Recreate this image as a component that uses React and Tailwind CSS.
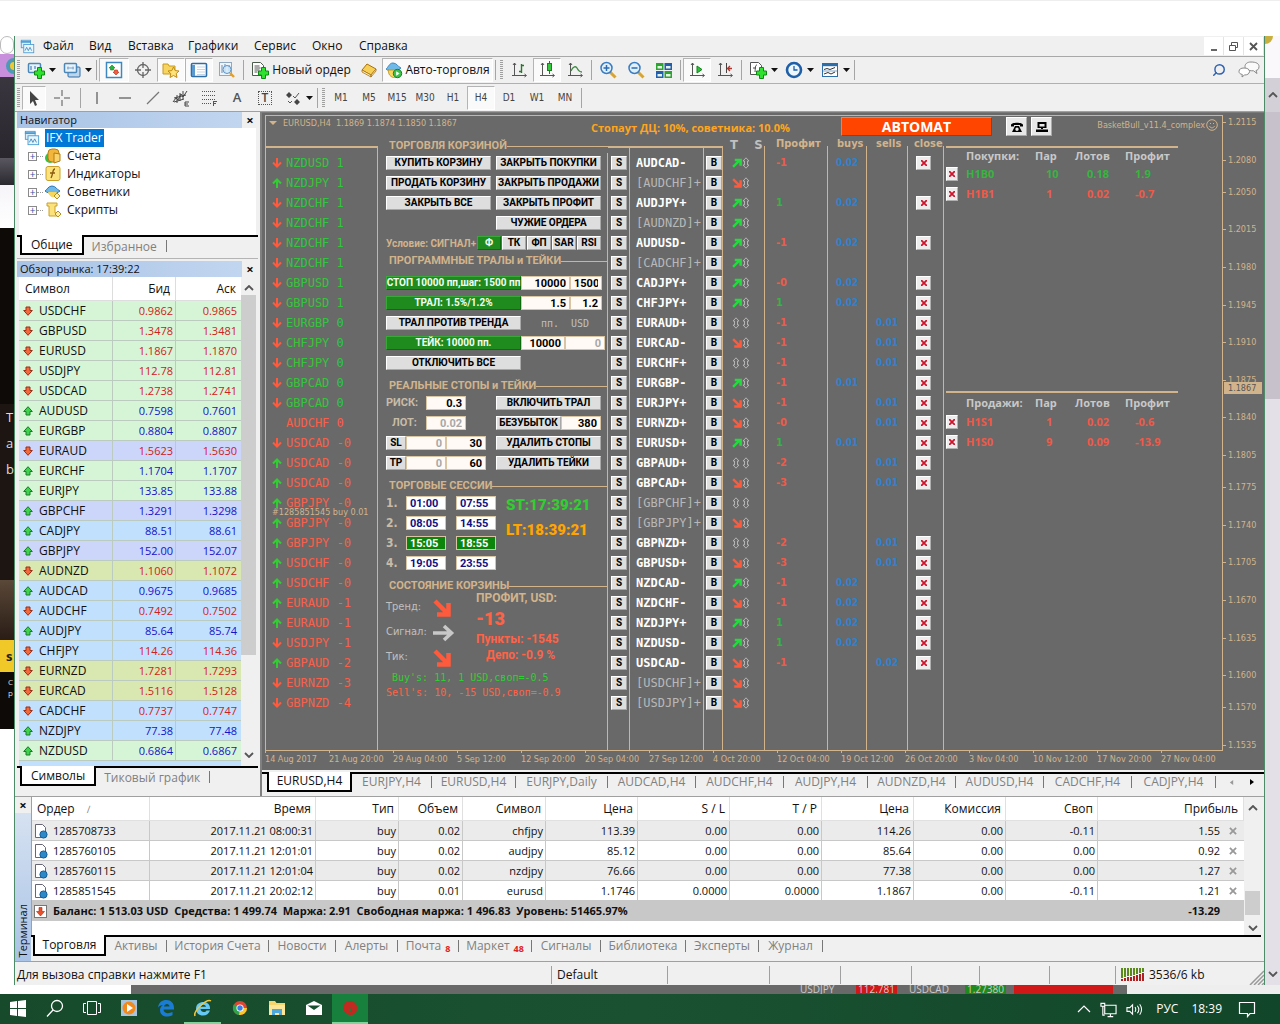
import React from 'react';
import { Search } from 'lucide-react';
import clsx from 'clsx';

const menuItems = [
  ['Файл', 'w-[46px]'],
  ['Вид', 'w-[39px]'],
  ['Вставка', 'w-[60px]'],
  ['Графики', 'w-[66px]'],
  ['Сервис', 'w-[58px]'],
  ['Окно', 'w-[47px]'],
  ['Справка', 'w-[60px]'],
];

const timeframes = ['M1', 'M5', 'M15', 'M30', 'H1', 'H4', 'D1', 'W1', 'MN'];

const quotes = [
  ['USDCHF', '0.9862', '0.9865', 'down', 'green'],
  ['GBPUSD', '1.3478', '1.3481', 'down', 'green'],
  ['EURUSD', '1.1867', '1.1870', 'down', 'green'],
  ['USDJPY', '112.78', '112.81', 'down', 'green'],
  ['USDCAD', '1.2738', '1.2741', 'down', 'green'],
  ['AUDUSD', '0.7598', '0.7601', 'up', 'green'],
  ['EURGBP', '0.8804', '0.8807', 'up', 'green'],
  ['EURAUD', '1.5623', '1.5630', 'down', 'violet'],
  ['EURCHF', '1.1704', '1.1707', 'up', 'green'],
  ['EURJPY', '133.85', '133.88', 'up', 'green'],
  ['GBPCHF', '1.3291', '1.3298', 'up', 'violet'],
  ['CADJPY', '88.51', '88.61', 'up', 'blue'],
  ['GBPJPY', '152.00', '152.07', 'up', 'violet'],
  ['AUDNZD', '1.1060', '1.1072', 'down', 'olive'],
  ['AUDCAD', '0.9675', '0.9685', 'up', 'blue'],
  ['AUDCHF', '0.7492', '0.7502', 'down', 'blue'],
  ['AUDJPY', '85.64', '85.74', 'up', 'blue'],
  ['CHFJPY', '114.26', '114.36', 'down', 'blue'],
  ['EURNZD', '1.7281', '1.7293', 'down', 'olive'],
  ['EURCAD', '1.5116', '1.5128', 'down', 'olive'],
  ['CADCHF', '0.7737', '0.7747', 'down', 'blue'],
  ['NZDJPY', '77.38', '77.48', 'up', 'blue'],
  ['NZDUSD', '0.6864', '0.6867', 'up', 'green'],
];

const rowTone = {
  green: 'bg-[#d6f5d6]',
  violet: 'bg-[#ccd5fa]',
  blue: 'bg-[#c0e0fe]',
  olive: 'bg-[#d9e8b0]',
};

const strength = [
  ['down', 'NZDUSD', '1'], ['up', 'NZDJPY', '1'], ['down', 'NZDCHF', '1'], ['down', 'NZDCHF', '1'],
  ['down', 'NZDCHF', '1'], ['down', 'NZDCHF', '1'], ['down', 'GBPUSD', '1'], ['down', 'GBPUSD', '1'],
  ['down', 'EURGBP', '0'], ['down', 'CHFJPY', '0'], ['down', 'CHFJPY', '0'], ['down', 'GBPCAD', '0'],
  ['down', 'GBPCAD', '0'], ['', 'AUDCHF', '0', true], ['down', 'USDCAD', '-0'], ['up', 'USDCAD', '-0'],
  ['up', 'USDCAD', '-0'], ['up', 'GBPJPY', '-0'], ['up', 'GBPJPY', '-0'], ['up', 'GBPJPY', '-0'],
  ['up', 'USDCHF', '-0'], ['up', 'USDCHF', '-0'], ['up', 'EURAUD', '-1'], ['up', 'EURAUD', '-1'],
  ['down', 'USDJPY', '-1'], ['up', 'GBPAUD', '-2'], ['down', 'EURNZD', '-3'], ['down', 'GBPNZD', '-4'],
];

// symbol, trend, profit, buys, sells
const pairs = [
  ['AUDCAD-', 'up', '-1', '0.02', ''],
  ['[AUDCHF]+', 'down', '', '', ''],
  ['AUDJPY+', 'up', '1', '0.02', ''],
  ['[AUDNZD]+', 'up', '', '', ''],
  ['AUDUSD-', 'up', '-1', '0.02', ''],
  ['[CADCHF]+', 'up', '', '', ''],
  ['CADJPY+', 'up', '-0', '0.02', ''],
  ['CHFJPY+', 'up', '1', '0.02', ''],
  ['EURAUD+', 'flat', '-1', '', '0.01'],
  ['EURCAD-', 'down', '-1', '', '0.01'],
  ['EURCHF+', 'flat', '-1', '', '0.01'],
  ['EURGBP-', 'up', '-1', '0.01', ''],
  ['EURJPY+', 'down', '-1', '', '0.01'],
  ['EURNZD+', 'down', '-0', '', '0.01'],
  ['EURUSD+', 'up', '1', '0.01', ''],
  ['GBPAUD+', 'flat', '-2', '', '0.01'],
  ['GBPCAD+', 'down', '-3', '', '0.01'],
  ['[GBPCHF]+', 'flat', '', '', ''],
  ['[GBPJPY]+', 'down', '', '', ''],
  ['GBPNZD+', 'flat', '-2', '', '0.01'],
  ['GBPUSD+', 'down', '-3', '', '0.01'],
  ['NZDCAD-', 'up', '-1', '0.02', ''],
  ['NZDCHF-', 'down', '-1', '0.02', ''],
  ['NZDJPY+', 'up', '1', '0.02', ''],
  ['NZDUSD-', 'up', '1', '0.02', ''],
  ['USDCAD-', 'down', '-1', '', '0.02'],
  ['[USDCHF]+', 'down', '', '', ''],
  ['[USDJPY]+', 'down', '', '', ''],
];

const prices = [
  1.2115, 1.208, 1.205, 1.2015, 1.198, 1.1945, 1.191, 1.1875, 1.184, 1.1805, 1.1775, 1.174, 1.1705, 1.167,
  1.1635, 1.16, 1.157, 1.1535,
];

const dates = [
  '14 Aug 2017', '21 Aug 20:00', '29 Aug 04:00', '5 Sep 12:00', '12 Sep 20:00', '20 Sep 04:00', '27 Sep 12:00',
  '4 Oct 20:00', '12 Oct 04:00', '19 Oct 12:00', '26 Oct 20:00', '3 Nov 04:00', '10 Nov 12:00', '17 Nov 20:00',
  '27 Nov 04:00',
];

const chartTabs = [
  ['EURJPY,H4', 'w-[80px]'],
  ['EURUSD,H4', 'w-[84px]'],
  ['EURJPY,Daily', 'w-[92px]'],
  ['AUDCAD,H4', 'w-[88px]'],
  ['AUDCHF,H4', 'w-[88px]'],
  ['AUDJPY,H4', 'w-[84px]'],
  ['AUDNZD,H4', 'w-[88px]'],
  ['AUDUSD,H4', 'w-[88px]'],
  ['CADCHF,H4', 'w-[88px]'],
  ['CADJPY,H4', 'w-[84px]'],
];

const terminalTabs = [
  ['Активы', 'w-[61px]'],
  ['История Счета', 'w-[102px]'],
  ['Новости', 'w-[67px]'],
  ['Алерты', 'w-[62px]'],
  ['Почта', 'w-[61px]', '8'],
  ['Маркет', 'w-[73px]', '48'],
  ['Сигналы', 'w-[69px]'],
  ['Библиотека', 'w-[85px]'],
  ['Эксперты', 'w-[73px]'],
  ['Журнал', 'w-[64px]'],
];

const orders = [
  ['1285708733', '2017.11.21 08:00:31', 'buy', '0.02', 'chfjpy', '113.39', '0.00', '0.00', '114.26', '0.00', '-0.11', '1.55'],
  ['1285760105', '2017.11.21 12:01:01', 'buy', '0.02', 'audjpy', '85.12', '0.00', '0.00', '85.64', '0.00', '0.00', '0.92'],
  ['1285760115', '2017.11.21 12:01:04', 'buy', '0.02', 'nzdjpy', '76.66', '0.00', '0.00', '77.38', '0.00', '0.00', '1.27'],
  ['1285851545', '2017.11.21 20:02:12', 'buy', '0.01', 'eurusd', '1.1746', '0.0000', '0.0000', '1.1867', '0.00', '-0.11', '1.21'],
];

const orderColumns = [
  ['Время', 'w-[166px]'],
  ['Тип', 'w-[83px]'],
  ['Объем', 'w-[64px]'],
  ['Символ', 'w-[83px]'],
  ['Цена', 'w-[92px]'],
  ['S / L', 'w-[92px]'],
  ['T / P', 'w-[92px]'],
  ['Цена', 'w-[92px]'],
  ['Комиссия', 'w-[92px]'],
  ['Своп', 'w-[92px]'],
];

/* ---------- icons ---------- */

const Svg = ({ size = 18, box = 18, className, children }) => (
  <svg width={size} height={size} viewBox={`0 0 ${box} ${box}`} fill="none" className={clsx('shrink-0', className)} aria-hidden="true">
    {children}
  </svg>
);

const Plus = () => <path d="M10.5 6.500h4v3.500h3v4h-3v3.500h-4v-3.500h-3v-4h3z" fill="#2fe02f" stroke="#0d8a12" />;

const AppIcon = ({ size = 15 }) => (
  <Svg size={size}>
    <rect x="1.500" y="1.500" width="11" height="9" fill="#d9edfb" stroke="#4a9ad0" />
    <path d="M1 3.500h12" stroke="#4a9ad0" strokeWidth="2" />
    <rect x="4.500" y="6.500" width="12" height="10" fill="#e8f5fd" stroke="#4a9ad0" />
    <path d="M6 14l2-4 2 4 2-4 2 4" stroke="#3a88c0" />
  </Svg>
);

const NewChartIcon = () => (
  <Svg>
    <rect x="1.500" y="2.500" width="12" height="9" rx="1" fill="#e8f2fa" stroke="#4a86b8" strokeWidth="1.500" />
    <path d="M4 5v4M8 5v3" stroke="#2d6da8" />
    <Plus />
  </Svg>
);

const ProfilesIcon = () => (
  <Svg>
    <rect x="5" y="6" width="12" height="10" rx="1" fill="#bdd6ec" stroke="#2d6da8" />
    <rect x="1.500" y="2.500" width="12" height="9" rx="1" fill="#e8f2fa" stroke="#4a86b8" strokeWidth="1.500" />
    <path d="M4 7h7M5 5.500v3M10 5.500v3" stroke="#7aa5cc" />
  </Svg>
);

const MarketIcon = () => (
  <Svg>
    <rect x="1.500" y="1.500" width="15" height="15" fill="#fff" stroke="#3d88c0" strokeWidth="1.500" />
    <path d="M7 4l3 3H8.500v2h-3V7H4z" fill="#22b83a" stroke="#128225" strokeWidth=".6" />
    <path d="M11 14l-3-3h1.500V9h3v2H14z" fill="#f06040" stroke="#b82a18" strokeWidth=".6" />
  </Svg>
);

const TargetIcon = () => (
  <Svg>
    <circle cx="9" cy="9" r="5.500" stroke="#666" strokeWidth="1.300" />
    <path d="M9 1v6M9 11v6M1 9h6M11 9h6" stroke="#666" strokeWidth="1.300" />
  </Svg>
);

const NavigatorIcon = () => (
  <Svg>
    <path d="M1 3h5l1 2h6v8H1z" fill="#f7d560" stroke="#c79a1e" />
    <path d="M11.500 6l1.700 3.600 3.800.4-2.800 2.600.8 3.900-3.500-2-3.500 2 .8-3.900L6 10l3.800-.4z" fill="#ffe27a" stroke="#c08a10" />
  </Svg>
);

const TerminalIcon = () => (
  <Svg>
    <rect x="1.500" y="2.500" width="15" height="13" rx="1" fill="#fff" stroke="#2d6da8" strokeWidth="1.600" />
    <path d="M2 4h3v11H2z" fill="#5a9ad0" />
    <path d="M7 6h8M7 8.500h8M7 11h8M7 13.500h8" stroke="#c5d6e6" />
  </Svg>
);

const TesterIcon = () => (
  <Svg>
    <rect x="1.500" y="1.500" width="12" height="13" fill="#eef4fa" stroke="#8fa9c0" />
    <path d="M4 4v8M7 3v8M11 4v6" stroke="#6b8cab" />
    <circle cx="9" cy="8.500" r="4" fill="#cfe8fb" fillOpacity=".8" stroke="#5c94c8" />
    <path d="M12 12l4 4" stroke="#e0a030" strokeWidth="2.400" />
  </Svg>
);

const NewOrderIcon = () => (
  <Svg>
    <path d="M1.500 1.500h8l3 3v10h-11z" fill="#fff" stroke="#4c5c4c" />
    <path d="M3.500 5h5M3.500 7h6M3.500 9h5M3.500 11h3" stroke="#555" />
    <Plus />
  </Svg>
);

const BookIcon = () => (
  <Svg>
    <path d="M7 3l9 5-5 6-9-5z" fill="#f8cf55" stroke="#a8700c" />
    <path d="M2 9l9 5v2l-9-5zM11 14l5-6v2l-5 6z" fill="#fff1c4" stroke="#a8700c" strokeWidth=".8" />
  </Svg>
);

const ExpertIcon = ({ size = 18 }) => (
  <Svg size={size}>
    <path d="M1 8c2-1 3-6 7-6s5 4 8 5c-3 3-12 4-15 1z" fill="#6fb9e8" stroke="#3d88c0" />
    <path d="M3 9h11l-1 5c-2 4-7 3-9-1z" fill="#f6d65c" stroke="#b98e1a" strokeWidth=".8" />
    <circle cx="12.500" cy="12.500" r="4.200" fill="#3fbf4a" stroke="#128225" />
    <path d="M11.200 10.300v4.400l3.500-2.200z" fill="#fff" />
  </Svg>
);

const Axes = () => <path d="M4.500 2v13M2 14.500h14M3 4l1.500-2L6 4M14.500 13l2 1.500-2 1.500" stroke="#555" />;

const BarsIcon = () => (
  <Svg>
    <Axes />
    <path d="M11.500 3v9M9 10.500h2.500M11.500 4.500H14" stroke="#28762c" strokeWidth="1.400" />
  </Svg>
);
const CandlesIcon = () => (
  <Svg>
    <Axes />
    <path d="M11.500 0v13" stroke="#14831c" />
    <rect x="9.500" y="2.500" width="4" height="7" fill="#35c63e" stroke="#14831c" />
  </Svg>
);
const LineIcon = () => (
  <Svg>
    <Axes />
    <path d="M5 10c2-5 5-5 6-3s2 4 5 4" stroke="#3c8a40" strokeWidth="1.300" />
  </Svg>
);
const ZoomIcon = ({ plus }) => (
  <Svg>
    <path d="M11 11l5.500 5.500" stroke="#d9a32e" strokeWidth="3" />
    <circle cx="7.500" cy="7" r="5.500" fill="#dff0fc" stroke="#3a7cc0" strokeWidth="1.500" />
    <path d={plus ? 'M4.500 7h6M7.500 4v6' : 'M4.500 7h6'} stroke="#2d6cb0" strokeWidth="1.500" />
  </Svg>
);
const TileIcon = () => (
  <Svg>
    <rect x="1" y="2" width="7.500" height="7" fill="#2ba52f" />
    <rect x="9.500" y="2" width="7.500" height="7" fill="#1f5fae" />
    <rect x="1" y="10" width="7.500" height="7" fill="#1f5fae" />
    <rect x="9.500" y="10" width="7.500" height="7" fill="#2ba52f" />
    <path d="M2.500 5h4.500v2.500H2.500zM11 5h4.500v2.500H11zM2.500 13h4.500v2.500H2.500zM11 13h4.500v2.500H11z" fill="#e6f2e6" />
  </Svg>
);
const ScrollIcon = () => (
  <Svg>
    <Axes />
    <path d="M9 5v7l5-3.500z" fill="#2ec23a" stroke="#14831c" />
  </Svg>
);
const ShiftIcon = () => (
  <Svg>
    <Axes />
    <path d="M10.500 2v10" stroke="#444" />
    <path d="M16 7.500h-4M14 5l-2.500 2.500L14 10" stroke="#b8322a" strokeWidth="1.300" />
  </Svg>
);
const IndicatorsIcon = () => (
  <Svg>
    <path d="M1.500 1.500h8l3 3v9h-11z" fill="#fff" stroke="#555" />
    <path d="M8 4c-2 0-1.500 3-2 7M4 7h3" stroke="#4a4a4a" />
    <Plus />
  </Svg>
);
const ClockIcon = () => (
  <Svg>
    <circle cx="9" cy="9" r="7" fill="#eef6fd" stroke="#1e5fa8" strokeWidth="2.600" />
    <path d="M9 5v4h3.500" stroke="#1e5fa8" strokeWidth="1.300" />
  </Svg>
);
const TemplateIcon = () => (
  <Svg>
    <rect x="1.500" y="2.500" width="15" height="13" fill="#fff" stroke="#2d6da8" />
    <path d="M1 4h16" stroke="#2d6da8" strokeWidth="2.400" />
    <path d="M3 8.500l3-1 3 1 5-2M3 13l4-1.500 3 1.500 4-2" stroke="#333" />
    <path d="M2 10h14" stroke="#2d6da8" strokeWidth=".6" />
  </Svg>
);
const ChatIcon = () => (
  <Svg size={22} box={22}>
    <path d="M13 3c5 0 8 1.500 8 4.500S19.500 11 18 11.500l1 3-3.500-2.700C9 12 7 10 7 7.500S9 3 13 3z" fill="#fafafa" stroke="#888" />
    <path d="M6 9c3 0 5.500 1 5.500 3.500S9 16 6.500 16L4 18l.3-2.500C2 15 1 14 1 12.500 1 10 3 9 6 9z" fill="#fff" stroke="#888" />
  </Svg>
);

const Caret = () => (
  <svg width="7" height="4" viewBox="0 0 7 4" className="shrink-0" aria-hidden="true">
    <path d="M0 0h7L3.500 4z" fill="#111" />
  </svg>
);

const Chevron = ({ down, className }) => (
  <svg width="10" height="6" viewBox="0 0 10 6" fill="none" className={className} aria-hidden="true">
    <path d={down ? 'M1 1l4 4 4-4' : 'M1 5l4-4 4 4'} stroke="currentColor" strokeWidth="1.800" />
  </svg>
);

const QuoteArrow = ({ dir }) => (
  <Svg size={10} box={10} className="mr-[6px]">
    {dir === 'up' ? (
      <path d="M5 .7L9.300 5.500H7V9H3V5.500H.7z" fill="#3fd24e" stroke="#1a7a26" />
    ) : (
      <path d="M5 9.300L9.300 4.500H7V1H3v3.500H.7z" fill="#f06a3c" stroke="#9c2c14" />
    )}
  </Svg>
);

const StrengthArrow = ({ dir }) => (
  <Svg size={10} box={10}>
    {dir === 'up' && <path d="M5 10V1.500M1 5.500l4-4 4 4" stroke="#32cd32" strokeWidth="2" />}
    {dir === 'down' && <path d="M5 0v8.500M1 4.500l4 4 4-4" stroke="#ff5a3c" strokeWidth="2" />}
  </Svg>
);

const Outline = () => (
  <svg width="8" height="12" viewBox="0 0 8 12" fill="none" className="shrink-0" aria-hidden="true">
    <path d="M4 .8L7 4H5.500v4H7l-3 3.200L1 8h1.500V4H1z" stroke="#b4b4b4" />
  </svg>
);

const TrendArrow = ({ dir, size = 9 }) => {
  if (dir === 'flat') return <Outline />;
  if (dir === 'right')
    return (
      <Svg size={22} box={22}>
        <path d="M0 11h18M11 4l7.500 7-7.500 7" stroke="#c8c8c8" strokeWidth="3.600" />
      </Svg>
    );
  return (
    <Svg size={size} box={18}>
      {dir === 'up' ? (
        <path d="M2 16L14 4M5 3.500h10.500V14" stroke="#28d840" strokeWidth="4.500" />
      ) : (
        <path d="M2 2l12 12M15.500 4v11.500H4" stroke="#ff5a3c" strokeWidth="4.500" />
      )}
    </Svg>
  );
};

/* ---------- toolbar ---------- */

const Grip = () => <span className="mx-[2px] h-5 w-[3px] shrink-0 bg-[repeating-linear-gradient(#a0a0a0_0_1px,#f0f0f0_1px_2px)]" />;
const Sep = () => <span className="mx-[2px] h-5 w-px shrink-0 bg-[#a5a5a5]" />;

const ToolButton = ({ label, active, className, children }) => (
  <button
    type="button"
    aria-label={label}
    className={clsx(
      'flex h-6 shrink-0 items-center justify-center border',
      active ? 'border-[#b4b4b4] border-r-white border-b-white bg-[#fafafa]' : 'border-transparent',
      className || 'w-7'
    )}
  >
    {children}
  </button>
);

const DropButton = ({ label, children }) => (
  <button type="button" aria-label={label} className="flex h-6 w-9 shrink-0 items-center gap-1 pl-[5px]">
    {children}
    <Caret />
  </button>
);

const MenuBar = () => (
  <div className="flex h-[21px] items-center border-b border-[#a8a8a8] bg-[#f0f0f0]">
    <span className="w-7 pl-[5px]"><AppIcon /></span>
    {menuItems.map(([name, width]) => (
      <button key={name} type="button" className={clsx('text-left text-[12px] leading-4', width)}>{name}</button>
    ))}
    <div className="ml-auto flex text-[#555]">
      {['M3 9h6', 'M1.500 4.500h6v5h-6zM3.500 4V1.500h6v5H8', 'M2 2l7 7M9 2l-7 7'].map((d, i) => (
        <button key={d} type="button" aria-label={['Свернуть', 'Восстановить', 'Закрыть'][i]} className="flex h-[18px] w-5 items-center justify-center border-r border-[#e4e4e4] bg-white">
          <Svg size={11} box={11}><path d={d} stroke="#555" strokeWidth={i === 1 ? 1 : 1.800} /></Svg>
        </button>
      ))}
    </div>
  </div>
);

const MainToolbar = () => (
  <div className="flex h-[27px] items-center border-b border-[#b0b0b0]">
    <Grip />
    <DropButton label="Новый график"><NewChartIcon /></DropButton>
    <DropButton label="Профили"><ProfilesIcon /></DropButton>
    <Sep />
    <ToolButton label="Обзор рынка" active className="w-[30px]"><MarketIcon /></ToolButton>
    <ToolButton label="Окно данных"><TargetIcon /></ToolButton>
    <ToolButton label="Навигатор" active><NavigatorIcon /></ToolButton>
    <ToolButton label="Терминал" active><TerminalIcon /></ToolButton>
    <ToolButton label="Тестер"><TesterIcon /></ToolButton>
    <Sep />
    <ToolButton label="Новый ордер" className="w-[110px] gap-[3px]">
      <NewOrderIcon />
      <span className="text-[12px]">Новый ордер</span>
    </ToolButton>
    <ToolButton label="MetaEditor" className="w-[26px]"><BookIcon /></ToolButton>
    <ToolButton label="Авто-торговля" active className="w-[111px] gap-[2px]">
      <ExpertIcon />
      <span className="text-[12px]">Авто-торговля</span>
    </ToolButton>
    <Sep />
    <Grip />
    <ToolButton label="Бары"><BarsIcon /></ToolButton>
    <ToolButton label="Свечи" active><CandlesIcon /></ToolButton>
    <ToolButton label="Линия"><LineIcon /></ToolButton>
    <Sep />
    <ToolButton label="Приблизить"><ZoomIcon plus /></ToolButton>
    <ToolButton label="Отдалить"><ZoomIcon /></ToolButton>
    <ToolButton label="Окна"><TileIcon /></ToolButton>
    <Sep />
    <ToolButton label="Автопрокрутка" active><ScrollIcon /></ToolButton>
    <ToolButton label="Сдвиг графика"><ShiftIcon /></ToolButton>
    <Sep />
    <DropButton label="Индикаторы"><IndicatorsIcon /></DropButton>
    <DropButton label="Периоды"><ClockIcon /></DropButton>
    <DropButton label="Шаблоны"><TemplateIcon /></DropButton>
    <Sep />
    <div className="ml-auto flex items-center gap-3 pr-1">
      <button type="button" aria-label="Поиск"><Search size={14} strokeWidth={2.500} color="#2d62b0" className="-scale-x-100" /></button>
      <button type="button" aria-label="Чат"><ChatIcon /></button>
    </div>
  </div>
);

const drawTools = [
  ['Вертикальная линия', <path key="v" d="M9 3v12" stroke="#555" strokeWidth="1.200" />],
  ['Горизонтальная линия', <path key="h" d="M3 9h12" stroke="#555" strokeWidth="1.200" />],
  ['Трендовая линия', <path key="t" d="M3 15L15 3" stroke="#777" strokeWidth="1.200" />],
  ['Канал', <path key="c" d="M1 13l3-4 2 2 3-6 2 3 4-6M2 9l12-3M2 13l10-3M5 6v8M8 4v8M11 2v8M13 13h4M13 15h3M13 17h4M13 13v4" stroke="#444" />],
  [
    'Фибоначчи',
    <g key="f" stroke="#555">
      <path d="M2 2.500h14M2 6.500h14M2 10.500h14M2 14.500h9" strokeDasharray="1 1" />
      <path d="M13.500 17v-5M13 12.500h4M13 14.500h3" />
    </g>,
  ],
];

const DrawToolbar = () => (
  <div className="flex h-[27px] items-center">
    <Grip />
    <ToolButton label="Курсор" active className="w-6">
      <Svg><path d="M5 2v13l3-3 2 5 2-1-2-5h4z" fill="#444" /></Svg>
    </ToolButton>
    <ToolButton label="Перекрестие" className="w-8">
      <Svg><path d="M9 1v6M9 11v6M1 9h6M11 9h6" stroke="#555" /></Svg>
    </ToolButton>
    <Sep />
    {drawTools.map(([label, shape]) => (
      <ToolButton key={label} label={label}><Svg>{shape}</Svg></ToolButton>
    ))}
    <ToolButton label="Текст"><span className="text-[13px] font-semibold text-[#555]">A</span></ToolButton>
    <ToolButton label="Метка">
      <span className="flex h-[14px] w-[14px] items-center justify-center border border-dotted border-[#555] text-[12px] leading-3 font-semibold text-[#444]">T</span>
    </ToolButton>
    <DropButton label="Стрелки">
      <Svg><path d="M2 6l3-3 3 3-3 3zM10 13l3-3 3 3-3 3z" fill="#444" /><path d="M4 12l2 2 2-2M9 7l2 2 4-5" stroke="#555" /></Svg>
    </DropButton>
    <Sep />
    <Grip />
    {timeframes.map((t) => (
      <ToolButton key={t} label={t} active={t === 'H4'}>
        <span className="font-['DejaVu_Sans_Condensed','DejaVu_Sans',sans-serif] text-[10px] text-[#444]">{t}</span>
      </ToolButton>
    ))}
    <Sep />
  </div>
);

/* ---------- side panels ---------- */

const PanelTitle = ({ children }) => (
  <div className="flex h-4 items-center bg-linear-to-r from-[#a9c3e6] to-[#c3d7f0] pl-[3px] leading-[14px]">
    <span className="grow pb-px">{children}</span>
    <button type="button" aria-label="Закрыть" className="flex h-4 w-4 items-center justify-center bg-[#f0f0f0] text-[13px] font-bold leading-3">×</button>
  </div>
);

const PanelTabs = ({ active, other }) => (
  <div className="flex h-5 border-t-2 border-black pl-[3px] leading-[17px]">
    <button type="button" className="-mt-[2px] border-2 border-t-0 border-black bg-white px-[9px] text-[12px]">{active}</button>
    <button type="button" className="ml-2 text-[12px] text-[#808080]">{other}</button>
    <span className="mt-[3px] ml-[9px] h-3 w-px bg-[#777]" />
  </div>
);

const treeIcons = [
  <Svg key="a"><circle cx="6" cy="11" r="5" fill="#38c044" /><rect x="4" y="2" width="11" height="13" rx="4" fill="#f2b63c" stroke="#b57d12" /><path d="M10 6l6 1v7l-6 2z" fill="#f8d26a" stroke="#b57d12" /></Svg>,
  <Svg key="i"><rect x="2" y="1.500" width="14" height="14" rx="2" fill="#fbe27a" stroke="#caa02a" /><path d="M11 4c-3 0-1.500 5-4 9M6 8h5" stroke="#8a5a10" strokeWidth="1.300" /></Svg>,
  <Svg key="e"><path d="M1 8c2-1 3-5 7-5s5 4 8 5c-3 3-12 3-15 0z" fill="#6fb9e8" stroke="#2d78b8" /><path d="M4 9h9l-3 5c-2 1-5-1-6-5z" fill="#f6d65c" /><path d="M13 10l3 3-3 3-3-3z" fill="#fff0a8" stroke="#b98e1a" /></Svg>,
  <Svg key="s"><path d="M3 2h10v3h-2v7h3v3H5V5H3z" fill="#fbe27a" stroke="#caa02a" /><path d="M14 10l3 3-3 3-3-3z" fill="#fff0a8" stroke="#b98e1a" /></Svg>,
];

const Navigator = () => (
  <section className="flex flex-col pb-[3px]">
    <PanelTitle>Навигатор</PanelTitle>
    <div className="mx-[2px] bg-white pt-px pb-4">
      <div className="flex h-[18px] items-center pl-[5px]">
        <AppIcon size={16} />
        <span className="ml-[5px] bg-[#0078d7] px-px text-[12px] leading-[18px] text-white">IFX Trader</span>
      </div>
      {['Счета', 'Индикаторы', 'Советники', 'Скрипты'].map((name, i) => (
        <div key={name} className="flex h-[18px] items-center pl-[9px]">
          <button type="button" aria-label={name} className="flex h-[9px] w-[9px] items-center justify-center border border-[#8a8a8a] text-[10px] leading-none text-[#3355aa]">+</button>
          <span className="mr-px w-[6px] border-t border-dotted border-[#999]" />
          {treeIcons[i]}
          <span className="ml-[5px] text-[12px]">{name}</span>
        </div>
      ))}
    </div>
    <PanelTabs active="Общие" other="Избранное" />
  </section>
);

const MarketWatch = () => (
  <section className="flex grow flex-col border-t border-[#b4b4b4] pt-[2px]">
    <PanelTitle>Обзор рынка: 17:39:22</PanelTitle>
    <div className="mx-[2px] flex bg-white">
      <div className="grow bg-[#c0e0fe] pb-[5px]">
        <table className="w-full table-fixed border-separate border-spacing-0 text-[11px] leading-4">
          <thead className="bg-white text-[12px]">
            <tr className="h-6">
              <th className="w-[94px] border-r border-b border-[#ddd] pl-[6px] text-left font-normal">Символ</th>
              <th className="w-[63px] border-r border-b border-[#ddd] pr-[5px] text-right font-normal">Бид</th>
              <th className="border-b border-[#ddd] pr-[5px] text-right font-normal">Аск</th>
            </tr>
          </thead>
          <tbody>
            {quotes.map(([symbol, bid, ask, dir, tone]) => (
              <tr key={symbol} className={clsx('h-5', rowTone[tone], dir === 'up' ? 'text-[#1414c8]' : 'text-[#d02020]')}>
                <td className="border-r border-b border-[#bccbbf] p-0 pl-1 text-[12px] text-[#111]">
                  <div className="flex items-center"><QuoteArrow dir={dir} />{symbol}</div>
                </td>
                <td className="border-r border-b border-[#bccbbf] p-0 pr-[2px] text-right">{bid}</td>
                <td className="border-b border-[#bccbbf] p-0 pr-1 text-right">{ask}</td>
              </tr>
            ))}
          </tbody>
        </table>
      </div>
      <div className="flex w-[17px] flex-col items-center bg-[#f0f0f0] py-2 text-[#555]">
        <Chevron />
        <span className="mt-1 h-[360px] w-[15px] bg-[#cdcdcd]" />
        <Chevron down className="mt-auto" />
      </div>
    </div>
    <PanelTabs active="Символы" other="Тиковый график" />
  </section>
);

/* ---------- basket adviser ---------- */

const ChartButton = ({ children, className, tone }) => (
  <button
    type="button"
    className={clsx(
      'flex h-[14px] shrink-0 items-center justify-center border font-[Roboto,sans-serif] text-[10px] leading-3 font-bold whitespace-nowrap',
      tone === 'green'
        ? 'border-[#38a838] border-r-[#0e6a0e] border-b-[#0e6a0e] bg-[#1f8b1f] text-[#f2fff2]'
        : 'border-white border-r-[#a8a8a8] border-b-[#a8a8a8] bg-[#dedede] text-black',
      className
    )}
  >
    {children}
  </button>
);

const Field = ({ label, value, className, id }) => (
  <input
    id={id}
    aria-label={label}
    defaultValue={value}
    className={clsx('h-[14px] shrink-0 border border-[#d9c4a4] px-[3px] font-[Roboto,sans-serif] text-[11px] leading-3 font-bold outline-none', className)}
  />
);

const Group = ({ title, className }) => (
  <div className={clsx('flex items-center pl-[11px]', className)}>
    <h2 className="font-[Roboto,sans-serif] text-[11px] leading-4 font-bold whitespace-nowrap text-[#d2b48c]">{title}</h2>
    <span className="h-px grow bg-[#d2b48c]" />
  </div>
);

const Line = ({ children }) => <div className="flex h-5 items-center pl-2">{children}</div>;

const CloseMark = ({ label, className }) => (
  <button type="button" aria-label={label} className={clsx('flex h-[14px] items-center justify-center border border-white border-r-[#b0b0b0] border-b-[#b0b0b0] bg-[#ececec]', className)}>
    <Svg size={6} box={6}><path d="M0 0l6 6M6 0L0 6" stroke="#d0142c" strokeWidth="1.800" /></Svg>
  </button>
);

const sessions = [
  ['01:00', '07:55'],
  ['08:05', '14:55'],
  ['15:05', '18:55'],
  ['19:05', '23:55'],
];

const Controls = () => (
  <div className="flex w-[230px] shrink-0 flex-col">
    <Group title="ТОРГОВЛЯ КОРЗИНОЙ" className="h-4 pt-[2px]" />
    <div className="grow border-r border-[#d2b48c]">
      <Line>
        <ChartButton className="w-[105px]">КУПИТЬ КОРЗИНУ</ChartButton>
        <ChartButton className="ml-[5px] w-[105px]">ЗАКРЫТЬ ПОКУПКИ</ChartButton>
      </Line>
      <Line>
        <ChartButton className="w-[105px]">ПРОДАТЬ КОРЗИНУ</ChartButton>
        <ChartButton className="ml-[5px] w-[105px]">ЗАКРЫТЬ ПРОДАЖИ</ChartButton>
      </Line>
      <Line>
        <ChartButton className="w-[105px]">ЗАКРЫТЬ ВСЕ</ChartButton>
        <ChartButton className="ml-[5px] w-[105px]">ЗАКРЫТЬ ПРОФИТ</ChartButton>
      </Line>
      <Line>
        <ChartButton className="ml-[110px] w-[105px]">ЧУЖИЕ ОРДЕРА</ChartButton>
      </Line>
      <Line>
        <span className="w-[91px] font-[Roboto,sans-serif] text-[10px] font-bold whitespace-nowrap text-[#d2b48c]">Условие: СИГНАЛ+</span>
        <ChartButton tone="green" className="w-6">Ф</ChartButton>
        {['ТК', 'ФП', 'SAR', 'RSI'].map((s) => (
          <ChartButton key={s} className="ml-px w-6">{s}</ChartButton>
        ))}
      </Line>
      <Group title="ПРОГРАММНЫЕ ТРАЛЫ и ТЕЙКИ" className="h-5 pb-1" />
      <Line>
        <ChartButton tone="green" className="w-[135px]">СТОП 10000 пп,шаг: 1500 пп</ChartButton>
        <Field label="Стоп, пп" value="10000" className="w-[49px] bg-[#fffaf5] text-right text-black" />
        <Field label="Шаг, пп" value="1500" className="w-8 bg-[#fffaf5] text-right text-black" />
      </Line>
      <Line>
        <ChartButton tone="green" className="w-[135px]">ТРАЛ: 1.5%/1.2%</ChartButton>
        <Field label="Трал, начало" value="1.5" className="w-[49px] bg-[#fffaf5] text-right text-black" />
        <Field label="Трал, шаг" value="1.2" className="w-8 bg-[#fffaf5] text-right text-black" />
      </Line>
      <Line>
        <ChartButton className="w-[135px]">ТРАЛ ПРОТИВ ТРЕНДА</ChartButton>
        <span className="ml-5 font-['DejaVu_Sans_Mono',monospace] text-[10px] text-[#c0c0c0]">пп.</span>
        <span className="ml-3 font-['DejaVu_Sans_Mono',monospace] text-[10px] text-[#c0c0c0]">USD</span>
      </Line>
      <Line>
        <ChartButton tone="green" className="w-[135px]">ТЕЙК: 10000 пп.</ChartButton>
        <Field label="Тейк, пп" value="10000" className="w-11 bg-[#fffaf5] text-right text-black" />
        <Field label="Тейк, USD" value="0" className="w-10 bg-[#fffaf5] text-right text-[#a8a8a8]" />
      </Line>
      <Line>
        <ChartButton className="w-[135px]">ОТКЛЮЧИТЬ ВСЕ</ChartButton>
      </Line>
      <Group title="РЕАЛЬНЫЕ СТОПЫ и ТЕЙКИ" className="h-5 pt-[6px]" />
      <Line>
        <label htmlFor="risk" className="w-10 font-[Roboto,sans-serif] text-[11px] font-bold text-[#c8bca8]">РИСК:</label>
        <Field id="risk" value="0.3" className="w-10 bg-[#fffaf5] text-right text-black" />
        <ChartButton className="ml-[30px] w-[105px]">ВКЛЮЧИТЬ ТРАЛ</ChartButton>
      </Line>
      <Line>
        <label htmlFor="lot" className="w-10 pl-[6px] font-[Roboto,sans-serif] text-[11px] font-bold text-[#c8bca8]">ЛОТ:</label>
        <Field id="lot" value="0.02" className="w-10 bg-[#fffaf5] text-right text-[#a8a8a8]" />
        <ChartButton className="ml-[30px] w-[65px]">БЕЗУБЫТОК</ChartButton>
        <Field label="Безубыток" value="380" className="w-10 bg-[#fffaf5] text-right text-black" />
      </Line>
      {[['SL', '30', 'УДАЛИТЬ СТОПЫ'], ['TP', '60', 'УДАЛИТЬ ТЕЙКИ']].map(([name, value, action]) => (
        <Line key={name}>
          <ChartButton className="w-5">{name}</ChartButton>
          <Field label={`${name} в пунктах`} value="0" className="w-10 bg-[#fffaf5] text-right text-[#a8a8a8]" />
          <Field label={name} value={value} className="w-10 bg-[#fffaf5] text-right text-black" />
          <ChartButton className="ml-[10px] w-[105px]">{action}</ChartButton>
        </Line>
      ))}
      <Group title="ТОРГОВЫЕ СЕССИИ" className="h-5 pt-[6px]" />
      <div className="flex">
        <div>
          {sessions.map(([from, to], i) => (
            <Line key={from}>
              <span className="w-5 text-[12px] font-bold text-[#c8bca8]">{i + 1}.</span>
              <Field label={`Сессия ${i + 1}, начало`} value={from} className={clsx('w-10', i === 2 ? 'bg-[#0b850b] text-white' : 'bg-white text-[#101080]')} />
              <Field label={`Сессия ${i + 1}, конец`} value={to} className={clsx('ml-[10px] w-10', i === 2 ? 'bg-[#0b850b] text-white' : 'bg-white text-[#101080]')} />
            </Line>
          ))}
        </div>
        <div className="ml-[10px] font-[Roboto,sans-serif] text-[15px] leading-[25px] font-black whitespace-nowrap">
          <p className="text-[#32cd32]">ST:17:39:21</p>
          <p className="text-[#ffa500]">LT:18:39:21</p>
        </div>
      </div>
      <Group title="СОСТОЯНИЕ КОРЗИНЫ" className="h-5 pt-[6px]" />
      <div className="flex pl-2">
        <div className="w-[90px] pt-[2px] font-['DejaVu_Sans_Condensed','DejaVu_Sans',sans-serif] text-[11px] text-[#c0c0c0]">
          {[['Тренд:', 'down'], ['Сигнал:', 'right'], ['Тик:', 'down']].map(([name, dir]) => (
            <div key={name} className="flex h-[25px] items-center">
              <span className="w-[47px]">{name}</span>
              <TrendArrow dir={dir} size={18} />
            </div>
          ))}
        </div>
        <div className="font-[Roboto,sans-serif] text-[12px] leading-4 font-bold text-[#ff6347]">
          <p className="-mt-[3px] text-[#d2b48c]">ПРОФИТ, USD:</p>
          <p className="text-[18px] leading-[25px] font-black">-13</p>
          <p>Пункты: -1545</p>
          <p className="pl-[10px]">Депо: -0.9 %</p>
        </div>
      </div>
      <div className="pl-2 font-['DejaVu_Sans_Mono',monospace] text-[10px] leading-[15px] whitespace-nowrap">
        <p className="pl-[6px] text-[#32cd32]">Buy's: 11, 1 USD,своп=-0.5</p>
        <p className="text-[#ff6347]">Sell's: 10, -15 USD,своп=-0.9</p>
      </div>
    </div>
  </div>
);

const Strength = () => (
  <div className="relative w-28 shrink-0 pt-[9px]">
    <div className="h-full border-t-2 border-r border-[#d2b48c] pt-[5px]">
      {strength.map(([dir, symbol, value, forceRed], i) => (
        <div key={i} className="flex h-5 items-center pl-[6px]">
          <StrengthArrow dir={dir} />
          <span className={clsx("ml-1 font-['DejaVu_Sans_Mono',monospace] text-[12px] leading-4 whitespace-pre", value.startsWith('-') || forceRed ? 'text-[#f8604a]' : 'text-[#34c43c]')}>
            {symbol} {value}
          </span>
        </div>
      ))}
    </div>
    <span className="absolute top-[369px] left-[6px] font-['DejaVu_Sans_Condensed','DejaVu_Sans',sans-serif] text-[9px] leading-3 whitespace-nowrap text-[#d2b48c]">#1285851545 buy 0.01</span>
  </div>
);

const pairColumns = [
  { name: 'sell', width: 'w-[22px]', rule: true },
  { name: 'symbol', width: 'w-[74px]', rule: true },
  { name: 'buy', width: 'w-[19px]', rule: true },
  { name: 'trend', title: 'T    S', width: 'w-[42px]', pad: 'pl-[7px]' },
  { name: 'profit', title: 'Профит', width: 'w-[63px]', pad: 'pl-[11px]' },
  { name: 'buys', title: 'buys', width: 'w-[39px]', pad: 'pl-[9px]' },
  { name: 'sells', title: 'sells', width: 'w-[41px]', pad: 'pl-[9px]' },
  { name: 'close', title: 'close', width: 'w-[36px]', pad: 'pl-[6px]' },
];

const Pairs = () => (
  <table className="w-[336px] shrink-0 table-fixed border-separate border-spacing-0 text-[11px] leading-4">
    <thead>
      <tr className="h-4 text-[#d2b48c]">
        {pairColumns.map((c) => (
          <th key={c.name} className={clsx('p-0 align-bottom', c.width)}>
            {c.rule ? (
              <div className="mt-[9px] h-[7px] border-t-2 border-r border-[#d2b48c]" />
            ) : (
              <div className={clsx('flex h-4 items-end justify-between font-bold whitespace-pre', c.pad)}>
                <span className={clsx('w-0', c.name === 'trend' ? 'text-[13px] leading-4 text-[#c0c0c0]' : 'text-[11px] leading-[18px]')}>{c.title}</span>
                <span className="h-[7px] w-px bg-[#d2b48c]" />
              </div>
            )}
          </th>
        ))}
      </tr>
    </thead>
    <tbody>
      {pairs.map(([symbol, trend, profit, buys, sells]) => (
        <tr key={symbol} className="h-5 *:border-r *:border-[#d2b48c] *:p-0">
          <td><ChartButton className="ml-[3px] w-[16px]">S</ChartButton></td>
          <td className={clsx("font-['DejaVu_Sans_Mono',monospace] text-[12px]", symbol.startsWith('[') ? 'text-[#b8b8b8]' : 'font-bold text-white')}>
            <span className="ml-[6px] block w-0">{symbol}</span>
          </td>
          <td><ChartButton className="ml-[2px] w-[16px]">B</ChartButton></td>
          <td>
            <div className="flex items-center pl-[9px]">
              <span className="flex w-[10px]"><TrendArrow dir={trend} size={10} /></span>
              <Outline />
            </div>
          </td>
          <td className={clsx('font-bold', profit.startsWith('-') ? 'text-[#f05a48]' : 'text-[#38b440]')}><span className="pl-[11px]">{profit}</span></td>
          <td className="text-[10px] font-bold text-[#2e82d0]"><span className="pl-2">{buys}</span></td>
          <td className="text-[10px] font-bold text-[#2e82d0]"><span className="pl-[9px]">{sells}</span></td>
          <td>{profit && <CloseMark label={`Закрыть ${symbol}`} className="ml-2 w-[15px]" />}</td>
        </tr>
      ))}
      <tr className="h-[37px] *:border-r *:border-[#d2b48c]">
        {pairColumns.map((c) => <td key={c.name} />)}
      </tr>
    </tbody>
  </table>
);

const Baskets = ({ title, rows, className, headClass }) => (
  <table className={clsx('w-[232px] table-fixed border-t-2 border-[#d2b48c] text-[11px] leading-4', className)}>
    <thead className="text-[#c8c8c8]">
      <tr className={clsx('text-left *:p-0 *:font-bold', headClass)}>
        <th className="w-5" />
        <th className="w-[69px]">{title}</th>
        <th className="w-10">Пар</th>
        <th className="w-[50px]">Лотов</th>
        <th>Профит</th>
      </tr>
    </thead>
    <tbody>
      {rows.map(([name, count, lots, profit]) => (
        <tr key={name} className={clsx('h-5 font-bold *:p-0', profit.startsWith('-') ? 'text-[#f05a48]' : 'text-[#38b440]')}>
          <td><CloseMark label={`Закрыть ${name}`} className="w-3" /></td>
          <td>{name}</td>
          <td><span className="pl-[11px]">{count}</span></td>
          <td><span className="pl-3">{lots}</span></td>
          <td><span className="pl-[10px]">{profit}</span></td>
        </tr>
      ))}
    </tbody>
  </table>
);

const PriceAxis = () => (
  <div className="relative flex w-[40px] shrink-0 flex-col pt-px">
    {prices.map((p, i) => {
      const next = prices[i + 1];
      return (
        <div
          key={p}
          className={clsx('flex items-start', next ? 'basis-0' : 'h-3')}
          style={next ? { flexGrow: Math.round((p - next) * 10000) } : undefined}
        >
          <span className="mt-[6px] h-px w-[3px] bg-[#d2b48c]" />
          <span className="ml-[2px] leading-3">{p.toFixed(4)}</span>
        </div>
      );
    })}
    <span className="absolute top-[267px] left-px w-[38px] bg-[#d2b48c] pl-1 leading-3 text-[#555]">1.1867</span>
  </div>
);

const Chart = () => (
  <div className="flex grow flex-col border-t border-[#7a7a7a] bg-[#696969] pt-[2px] pr-px pl-[3px] font-['DejaVu_Sans_Condensed','DejaVu_Sans',sans-serif] text-[9px] text-[#d2b48c]">
    <div className="flex">
      <div className="flex min-w-0 grow flex-col border border-[#d2b48c]">
        <div className="flex h-[21px] items-start whitespace-nowrap">
          <span className="flex w-[325px] shrink-0 items-center gap-[6px] pl-[3px] leading-[14px]">
            <svg width="8" height="4" viewBox="0 0 8 4" aria-hidden="true"><path d="M0 0h8L4 4z" fill="#d2b48c" /></svg>
            EURUSD,H4&nbsp; 1.1869 1.1874 1.1850 1.1867
          </span>
          <span className="w-[250px] shrink-0 pt-1 font-['Open_Sans',sans-serif] text-[11px] leading-4 font-bold text-[#ffa520]">
            Стопаут ДЦ: 10%, советника: 10.0%
          </span>
          <button type="button" className="mt-px h-[19px] w-[151px] shrink-0 border border-[#ff7a40] border-r-[#b83200] border-b-[#b83200] bg-[#ff4500] font-['Open_Sans',sans-serif] text-[14px] leading-4 font-bold text-white">
            АВТОМАТ
          </button>
          {['Телефон', 'Компьютер'].map((name, i) => (
            <button key={name} type="button" aria-label={name} className={clsx('mt-px flex h-[19px] w-[21px] shrink-0 items-center justify-center border border-white border-r-[#aaa] border-b-[#aaa] bg-[#e8e8e8]', i ? 'ml-1' : 'ml-[14px]')}>
              <Svg size={14} box={14}>
                {i ? (
                  <path d="M2.500 2h9v6h-9zM1 9.500h12V12H1zM4.500 4v2.500h5V4zM6 8h2v2H6z" fill="#000" fillRule="evenodd" />
                ) : (
                  <path d="M1 5c0-3 12-3 12 0v1.500h-3V5H4v1.500H1zM5 6h4l3 6H2zM7 7.500a1.700 1.700 0 100 3.400 1.700 1.700 0 000-3.400z" fill="#000" fillRule="evenodd" />
                )}
              </Svg>
            </button>
          ))}
          <span className="ml-auto flex items-center gap-px pr-1 leading-[18px]">
            BasketBull_v11.4_complex
            <Svg size={12} box={12}><circle cx="6" cy="6" r="5.300" stroke="#d2b48c" /><path d="M3.500 7c1 2.500 4 2.500 5 0M4.500 4v1M7.500 4v1" stroke="#d2b48c" /></Svg>
          </span>
        </div>
        <div className="flex">
          <Strength />
          <Controls />
          <Pairs />
          <div className="min-w-0 grow overflow-hidden pt-[9px] pl-[2px] font-['Open_Sans',sans-serif]">
            <Baskets title="Покупки:" headClass="h-[15px]" rows={[['H1B0', '10', '0.18', '1.9'], ['H1B1', '1', '0.02', '-0.7']]} />
            <Baskets title="Продажи:" headClass="h-5" className="mt-[187px]" rows={[['H1S1', '1', '0.02', '-0.6'], ['H1S0', '9', '0.09', '-13.9']]} />
          </div>
        </div>
      </div>
      <PriceAxis />
    </div>
    <div className="flex h-[19px] overflow-hidden">
      {dates.map((d) => (
        <span key={d} className="w-16 shrink-0 leading-3 whitespace-nowrap">
          <span className="block h-[2px] w-px bg-[#d2b48c]" />
          {d}
        </span>
      ))}
    </div>
  </div>
);

const ChartTabs = () => (
  <div className="mt-[2px] flex h-6 border-t-2 border-black pl-[5px] text-[12px] whitespace-nowrap">
    <button type="button" className="-mt-[2px] h-5 w-[85px] shrink-0 border-2 border-t-0 border-black bg-white leading-[18px]">EURUSD,H4</button>
    {chartTabs.map(([name, width], i) => (
      <button key={i} type="button" className={clsx('flex h-4 shrink-0 items-center justify-center text-[#808080]', width)}>
        <span className="grow text-center">{name}</span>
        <span className="h-3 w-px bg-[#777]" />
      </button>
    ))}
    <div className="ml-auto flex h-4 items-center gap-[15px] pr-[9px]">
      <button type="button" aria-label="Назад"><Svg size={5} box={6}><path d="M5 0v6L1 3z" fill="#999" /></Svg></button>
      <button type="button" aria-label="Вперед"><Svg size={6} box={6}><path d="M1 0v6l4-3z" fill="#000" /></Svg></button>
    </div>
  </div>
);

/* ---------- terminal ---------- */

const OrderIcon = () => (
  <Svg size={16} box={16}>
    <path d="M2.500 1.500h7l3 3v10h-10z" fill="#fff" stroke="#667" />
    <circle cx="10.500" cy="11.500" r="3.600" fill="#2d88c8" stroke="#1a5c94" />
  </Svg>
);

const Terminal = () => (
  <section className="flex border-t border-[#a0a0a0] pr-[3px]">
    <div className="flex w-4 shrink-0 flex-col items-center bg-linear-to-b from-[#dbe5f2] to-[#a9c3e6] pb-1">
      <button type="button" aria-label="Закрыть" className="h-4 w-full bg-[#f0f0f0] text-[13px] leading-3 font-bold">×</button>
      <span className="mt-auto rotate-180 text-[11px] leading-3 [writing-mode:vertical-rl]">Терминал</span>
    </div>
    <div className="min-w-0 grow">
      <div className="flex border-l border-[#a0a0a0] bg-white pb-[14px]">
        <table className="min-w-0 grow table-fixed border-separate border-spacing-0 text-right leading-4">
          <thead>
            <tr className="h-6 text-[12px] *:border-r *:border-b *:border-[#e0e0e0] *:p-0 *:font-normal">
              <th className="w-[118px] text-left"><span className="pl-[5px]">Ордер</span><span className="pl-3 text-[10px] text-[#888]">∕</span></th>
              {orderColumns.map(([name, width], i) => (
                <th key={i} className={width}><span className="pr-1">{name}</span></th>
              ))}
              <th><span className="pr-[5px]">Прибыль</span></th>
            </tr>
          </thead>
          <tbody>
            {orders.map(([ticket, ...cells], row) => (
              <tr key={ticket} className={clsx('h-5 *:border-b *:border-[#c8c8c8] *:p-0', row % 2 ? 'bg-white' : 'bg-[#ebebeb]')}>
                <td className="border-r">
                  <div className="flex items-center gap-1 pl-px"><OrderIcon />{ticket}</div>
                </td>
                {cells.slice(0, -1).map((c, i) => (
                  <td key={i} className="border-r"><span className="pr-[2px]">{c}</span></td>
                ))}
                <td>
                  {cells[cells.length - 1]}
                  <button type="button" aria-label={`Закрыть ${ticket}`} className="mr-[7px] ml-[9px]"><Svg size={8} box={9}><path d="M1 1l7 7M8 1L1 8" stroke="#999" strokeWidth="2" /></Svg></button>
                </td>
              </tr>
            ))}
            <tr className="h-5 bg-[#c8c8c8] font-bold *:p-0">
              <td colSpan={11} className="text-left">
                <div className="flex items-center gap-[6px] pl-[2px] whitespace-pre">
                  <Svg size={13} box={13}><rect x=".5" y=".5" width="12" height="12" fill="#fff" stroke="#777" /><path d="M6.500 11l4-4.500H8V2.500H5v4H2.500z" fill="#e8502c" stroke="#a62a12" strokeWidth=".6" /></Svg>
                  {'Баланс: 1 513.03 USD  Средства: 1 499.74  Маржа: 2.91  Свободная маржа: 1 496.83  Уровень: 51465.97%'}
                </div>
              </td>
              <td><span className="pr-6">-13.29</span></td>
            </tr>
          </tbody>
        </table>
        <div className="-mb-[14px] flex w-[17px] shrink-0 flex-col items-center bg-[#f0f0f0] pt-2 pb-1 text-[#555]">
          <Chevron />
          <span className="mt-auto mb-[10px] h-6 w-[15px] bg-[#cdcdcd]" />
          <Chevron down />
        </div>
      </div>
      <div className="flex h-[26px] border-t-2 border-black pl-[2px] text-[12px] whitespace-nowrap">
        <button type="button" className="-mt-[2px] h-[21px] w-[73px] shrink-0 border-2 border-t-0 border-black bg-white leading-5">Торговля</button>
        {terminalTabs.map(([name, width, count]) => (
          <button key={name} type="button" className={clsx('flex h-[18px] shrink-0 items-center text-[#808080]', width)}>
            <span className="grow text-center">
              {name}
              {count && <sub className="pl-1 text-[9px] font-bold text-[#e02020]">{count}</sub>}
            </span>
            <span className="h-3 w-px bg-[#777]" />
          </button>
        ))}
      </div>
    </div>
  </section>
);

const StatusBar = () => (
  <footer className="flex h-6 items-center border-t border-[#a0a0a0] pt-[2px] text-[12px] leading-[18px]">
    <span className="grow pl-[2px]">Для вызова справки нажмите F1</span>
    <span className="h-[18px] w-[116px] border-l border-[#a0a0a0] pl-[5px]">Default</span>
    <span className="h-[18px] w-[102px] border-l border-[#a0a0a0]" />
    <span className="h-[18px] w-[71px] border-l border-[#a0a0a0]" />
    <span className="h-[18px] w-[71px] border-l border-[#a0a0a0]" />
    <span className="h-[18px] w-[68px] border-l border-[#a0a0a0]" />
    <span className="h-[18px] w-[70px] border-l border-[#a0a0a0]" />
    <span className="h-[18px] w-[66px] border-l border-[#a0a0a0]" />
    <span className="flex h-[18px] w-[134px] items-center gap-1 border-l border-[#a0a0a0] pl-[5px]">
      <svg width="24" height="13" viewBox="0 0 24 13" aria-hidden="true">
        {[10, 9, 8, 8, 7, 6, 5, 4].map((h, i) => (
          <g key={i}>
            <rect x={i * 3} y="0" width="2" height={h} fill="#5a8a1c" />
            <rect x={i * 3} y={h + 1} width="2" height={12 - h} fill="#b02020" />
          </g>
        ))}
      </svg>
      3536/6 kb
    </span>
    <svg width="15" height="15" viewBox="0 0 15 15" className="self-end" aria-hidden="true">
      <path d="M1 15L15 1M5 15L15 5M9 15l6-6M13 15l2-2" stroke="#999" strokeWidth="1.500" />
    </svg>
  </footer>
);

/* ---------- desktop ---------- */

const LeftEdge = () => (
  <div className="flex w-[14px] shrink-0 flex-col bg-white text-[13px] leading-[26px] text-[#ddd]">
    <div className="h-[18px] rounded-full border border-[#bbb]" />
    <div className="flex h-[23px] items-center justify-end overflow-hidden bg-[#c890dc]"><span className="-mr-2 h-4 w-4 shrink-0 rounded-full border-4 border-[#4d9ab8] bg-[#f0c830]" /></div>
    <div className="h-[81px] bg-linear-to-b from-[#3a363f] to-[#29262e]" />
    <div className="h-[27px] bg-linear-to-b from-[#5a5760] to-[#2b2930]" />
    <div className="h-[43px] bg-linear-to-b from-[#f6f4f8] to-white" />
    <div className="h-[176px] bg-[#0d0a08]" />
    <div className="h-[176px] bg-[#1d1512] pl-[6px]">
      <p>T</p>
      <p>a</p>
      <p>b</p>
    </div>
    <div className="h-[60px] bg-linear-to-b from-[#5a4838] to-[#2a1d16]" />
    <div className="h-8 bg-[#f0c828] pl-[6px] leading-8 font-bold text-[#222]">s</div>
    <div className="h-[57px] bg-[#0d0a08] pt-1 pl-2 text-[8px] leading-[11px]">
      <p>C</p>
      <p>p</p>
    </div>
  </div>
);

const RightEdge = () => (
  <div className="flex w-[15px] shrink-0 flex-col items-center bg-[#e4e0e8] text-[#555]">
    <div className="h-[42px] w-full bg-[#faf8fb]"><span className="block h-2 w-2 rounded-br-full bg-[#c8b040]" /></div>
    <div className="flex h-[34px] w-full items-center justify-center bg-[#d4d0d8]"><Chevron /></div>
    <div className="h-[287px] w-full bg-[#c6c1ca]" />
    <Chevron down className="mt-auto mb-2" />
  </div>
);

const taskIcons = [
  ['Пуск', <path key="w" d="M1 3l7-1v7H1zM9 2l8-1v8H9zM1 10h7v7l-7-1zM9 10h8v8l-8-1z" fill="#fff" />],
  ['Поиск', <path key="s" d="M11 1.500a5.500 5.500 0 100 11 5.500 5.500 0 000-11zM7 11l-6 6.500" stroke="#fff" strokeWidth="1.300" />],
  ['Представление задач', <path key="t" d="M4.500 2.500h9v13h-9zM3 4.500H.5v9H3M15 4.500h2.500v9H15" stroke="#fff" />],
  ['Windows Media', <g key="m"><rect x="1" y="1" width="16" height="16" fill="#a9c4de" /><circle cx="9" cy="9" r="6.500" fill="#f08a1c" /><path d="M7 5v8l6-4z" fill="#fff" /></g>],
  ['Edge', <path key="e" d="M1 8.500C2 3 5 1 9.500 1 14 1 17 4 17 9v1.500H6.500c.3 4 5 4.500 9 2.500v3.300C10 19 3 17.500 3 11c0-2 1-4 3-5-2 0-4 1-5 2.500zm6-1h5.500C12.500 4 7.500 4 7 7.500z" fill="#1b7cd6" />],
  ['Internet Explorer', <g key="i"><path d="M2 10c0-5 3.500-7 7.500-7s7 3 6.500 7H6.500c.2 3.500 5 4 6 1.500H16c-1 3-3.500 5-7 5-4 0-7-2.500-7-6.500zm4.500-2.300H12C11.700 5 7 5 6.500 7.700z" fill="#66c8f4" /><path d="M1 17C-1 12 13-1 17 2" stroke="#f4c83a" strokeWidth="1.500" /></g>],
  ['Chrome', <g key="c"><circle cx="9" cy="9" r="7" fill="#e04434" /><path d="M9 9L3 5.300A7 7 0 009 16z" fill="#2ea54c" /><path d="M9 9h7A7 7 0 018 16z" fill="#f8c82c" /><circle cx="9" cy="9" r="3.600" fill="#fff" /><circle cx="9" cy="9" r="2.700" fill="#3c7ce8" /></g>],
  ['Проводник', <g key="f"><path d="M1 2h6l1.500 2H17v12H1z" fill="#f6d66c" /><path d="M1 6h16v10H1z" fill="#fbe69a" /><path d="M4 16v-6h10v6h-3v-2H7v2z" fill="#4fa8dc" /></g>],
  ['Почта', <g key="p"><path d="M1 6l8-4 8 4v10H1z" fill="#fff" /><path d="M2.500 6.500h13L9 11z" fill="#16502e" /></g>],
];

const Taskbar = () => (
  <div className="flex h-[30px] shrink-0 bg-linear-to-r from-[#164a2b] via-[#1a5231] to-[#12462a] text-[12px] text-white">
    {taskIcons.map(([label, shape], i) => (
      <button key={label} type="button" aria-label={label} className={clsx('flex shrink-0 items-center justify-center border-b-2', i === 0 ? 'w-9' : 'w-[37px]', i === 5 ? 'border-[#7fd49c]' : 'border-transparent')}>
        <Svg>{shape}</Svg>
      </button>
    ))}
    <button type="button" aria-label="IFX Trader" className="flex w-9 shrink-0 items-center justify-center border-b-2 border-[#7fd49c] bg-[#17803c]">
      <Svg><path d="M3 6c2-5 9-5 12-1 3 5 0 11-5 11s-9-4-7-10zm6 2l-1 4h2z" fill="#c02a20" fillRule="evenodd" /></Svg>
    </button>
    <div className="ml-auto flex items-center gap-[9px] pr-6">
      <svg width="14" height="8" viewBox="0 0 14 8" fill="none" aria-hidden="true"><path d="M1 7l6-6 6 6" stroke="#fff" strokeWidth="1.200" /></svg>
      <Svg size={17}><path d="M5 4.500h12v9H5zM8 16.500h6M11 13.500v3M1 2.500h4v3H1zM3 6v9h2" stroke="#fff" strokeWidth="1.200" /></Svg>
      <Svg size={17}><path d="M1 7v4h3l3 3V4L4 7zM9.500 6.500c1 1.500 1 3.500 0 5M12 5c2 2.500 2 5.500 0 8M14.500 3.500c2.500 3.500 2.500 7.500 0 11" stroke="#fff" strokeWidth="1.100" /></Svg>
      <span className="ml-1">РУС</span>
      <time className="ml-1">18:39</time>
      <Svg size={18} className="ml-[7px]"><path d="M1.500 2.500h15v11H12l-2.500 3v-3h-8z" stroke="#fff" strokeWidth="1.200" /></Svg>
    </div>
  </div>
);

const App = () => {
  return (
    <div className="flex min-h-screen flex-col bg-white font-['Open_Sans','Noto_Sans',sans-serif] text-[11px] text-[#111]">
      <div className="h-9 shrink-0 border-t border-[#eee]" />
      <div className="flex grow">
        <LeftEdge />
        <main className="flex min-w-0 grow flex-col border-r border-l border-[#4d8a68] bg-[#f0f0f0]">
          <MenuBar />
          <MainToolbar />
          <DrawToolbar />
          <div className="flex border-t border-[#a0a0a0]">
            <div className="flex w-[245px] shrink-0 flex-col pr-[2px] pl-[2px]">
              <Navigator />
              <MarketWatch />
            </div>
            <div className="flex min-w-0 grow flex-col border-l-2 border-[#808080]">
              <Chart />
              <ChartTabs />
            </div>
          </div>
          <Terminal />
          <StatusBar />
        </main>
        <RightEdge />
      </div>
      <div className="flex h-[9px] shrink-0 items-end overflow-hidden text-[10px] leading-[10px] text-[#ccc]">
        <span className="h-full grow" />
        <div className="flex h-full w-[996px] items-end bg-[#696969] pl-[669px]">
          <span className="w-[56px]">USDJPY</span>
          <span className="w-[41px] bg-[#d01818] text-center">112.781</span>
          <span className="w-[68px] pl-3">USDCAD</span>
          <span className="w-[41px] bg-[#1f8b1f] text-center">1.27380</span>
          <span className="ml-2 h-full w-[99px] bg-[#d01818]" />
        </div>
        <span className="h-full w-[153px] bg-[#eeeeee]" />
      </div>
      <Taskbar />
    </div>
  );
};

export default App;
